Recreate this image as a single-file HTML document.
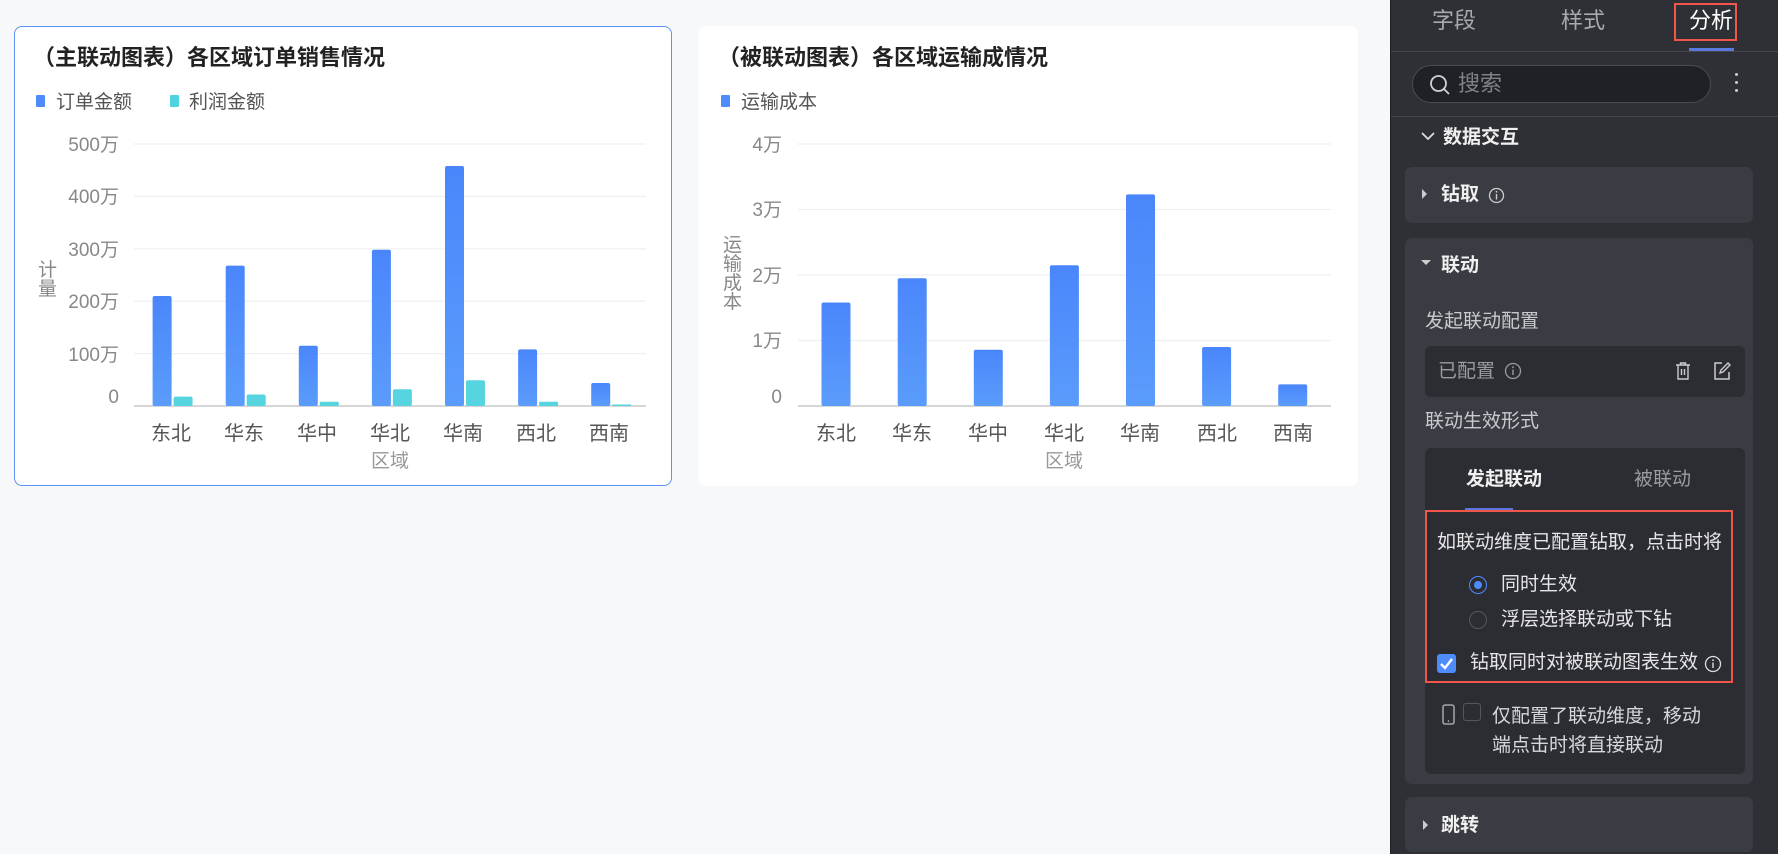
<!DOCTYPE html>
<html><head><meta charset="utf-8"><style>
*{margin:0;padding:0;box-sizing:border-box}
body{width:1778px;height:854px;background:#f7f8fa;position:relative;overflow:hidden;font-family:"Liberation Sans","Noto Sans CJK SC",sans-serif}
.a{position:absolute;white-space:nowrap}
.card{position:absolute;background:#fff;border-radius:8px}
#panel{position:absolute;left:1390px;top:0;width:388px;height:854px;background:#2f3036;border-left:1px solid #1e1f23}
.p{position:absolute;white-space:nowrap;font-size:19px;color:#d7d8db;line-height:22px}
.box{position:absolute;background:#3a3c43;border-radius:7px}
.inner{position:absolute;background:#2c2d33;border-radius:6px}
</style></head><body>
<div class="card" style="left:14px;top:26px;width:658px;height:460px;border:1.5px solid #5b93f7"></div>
<div class="card" style="left:699px;top:26px;width:659px;height:460px"></div>
<svg class="a" style="left:0;top:0" width="1390" height="854" font-family="Liberation Sans,Noto Sans CJK SC,sans-serif">
<defs><linearGradient id="g" x1="0" y1="0" x2="0" y2="1"><stop offset="0" stop-color="#4a86fb"/><stop offset="1" stop-color="#5a9cfb"/></linearGradient></defs>
<text x="33" y="65" font-size="22" font-weight="bold" fill="#222">（主联动图表）各区域订单销售情况</text>
<rect x="36" y="95" width="9" height="12" rx="1" fill="#4e8cfb"/><text x="56" y="108" font-size="19" fill="#555">订单金额</text>
<rect x="170" y="95" width="9" height="12" rx="1" fill="#4fd3de"/><text x="189" y="108" font-size="19" fill="#555">利润金额</text>
<g stroke="#eeeff2" stroke-width="1.2"><line x1="134" y1="144" x2="646" y2="144"/><line x1="134" y1="196.4" x2="646" y2="196.4"/><line x1="134" y1="248.8" x2="646" y2="248.8"/><line x1="134" y1="301.2" x2="646" y2="301.2"/><line x1="134" y1="353.6" x2="646" y2="353.6"/></g>
<line x1="134" y1="406" x2="646" y2="406" stroke="#c8c9cc" stroke-width="1.5"/>
<g font-size="19" fill="#888" text-anchor="end"><text x="119" y="151">500万</text><text x="119" y="203">400万</text><text x="119" y="256">300万</text><text x="119" y="308">200万</text><text x="119" y="361">100万</text><text x="119" y="403">0</text></g>
<g font-size="19" fill="#888"><text x="38" y="276">计</text><text x="38" y="295">量</text></g>
<g fill="url(#g)"><rect x="152.6" y="296" width="19" height="110" rx="2"/><rect x="225.7" y="265.6" width="19" height="140.4" rx="2"/><rect x="298.8" y="345.7" width="19" height="60.3" rx="2"/><rect x="371.9" y="249.8" width="19" height="156.2" rx="2"/><rect x="445" y="166" width="19" height="240" rx="2"/><rect x="518.1" y="349.4" width="19" height="56.6" rx="2"/><rect x="591.2" y="383" width="19" height="23" rx="2"/></g>
<g fill="#56d4df"><rect x="173.6" y="396.6" width="19" height="9.4" rx="2"/><rect x="246.7" y="394.5" width="19" height="11.5" rx="2"/><rect x="319.8" y="401.8" width="19" height="4.2" rx="1"/><rect x="392.9" y="389.2" width="19" height="16.8" rx="2"/><rect x="466" y="380.3" width="19" height="25.7" rx="2"/><rect x="539.1" y="401.8" width="19" height="4.2" rx="1"/><rect x="612.2" y="404.5" width="19" height="1.5"/></g>
<g font-size="20" fill="#555" text-anchor="middle"><text x="171" y="440">东北</text><text x="244" y="440">华东</text><text x="317" y="440">华中</text><text x="390" y="440">华北</text><text x="463" y="440">华南</text><text x="536" y="440">西北</text><text x="609" y="440">西南</text></g>
<text x="390" y="467" font-size="19" fill="#999" text-anchor="middle">区域</text>

<text x="718" y="65" font-size="22" font-weight="bold" fill="#222">（被联动图表）各区域运输成情况</text>
<rect x="721" y="95" width="9" height="12" rx="1" fill="#4e8cfb"/><text x="741" y="108" font-size="19" fill="#555">运输成本</text>
<g stroke="#eeeff2" stroke-width="1.2"><line x1="798" y1="144" x2="1331" y2="144"/><line x1="798" y1="209.5" x2="1331" y2="209.5"/><line x1="798" y1="275" x2="1331" y2="275"/><line x1="798" y1="340.5" x2="1331" y2="340.5"/></g>
<line x1="798" y1="406" x2="1331" y2="406" stroke="#c8c9cc" stroke-width="1.5"/>
<g font-size="19" fill="#888" text-anchor="end"><text x="782" y="151">4万</text><text x="782" y="216">3万</text><text x="782" y="282">2万</text><text x="782" y="347">1万</text><text x="782" y="403">0</text></g>
<g font-size="19" fill="#888"><text x="723" y="251">运</text><text x="723" y="270">输</text><text x="723" y="289">成</text><text x="723" y="308">本</text></g>
<g fill="url(#g)"><rect x="821.5" y="302.5" width="29" height="103.5" rx="2"/><rect x="897.7" y="278.3" width="29" height="127.7" rx="2"/><rect x="973.8" y="349.7" width="29" height="56.3" rx="2"/><rect x="1049.9" y="265.2" width="29" height="140.8" rx="2"/><rect x="1126" y="194.4" width="29" height="211.6" rx="2"/><rect x="1202.1" y="347" width="29" height="59" rx="2"/><rect x="1278.2" y="384.4" width="29" height="21.6" rx="2"/></g>
<g font-size="20" fill="#555" text-anchor="middle"><text x="836" y="440">东北</text><text x="912" y="440">华东</text><text x="988" y="440">华中</text><text x="1064" y="440">华北</text><text x="1140" y="440">华南</text><text x="1217" y="440">西北</text><text x="1293" y="440">西南</text></g>
<text x="1064" y="467" font-size="19" fill="#999" text-anchor="middle">区域</text>
</svg>

<div id="panel">
<div class="p" style="left:41px;top:8px;font-size:22px;line-height:26px;color:#a9aaae">字段</div>
<div class="p" style="left:170px;top:8px;font-size:22px;line-height:26px;color:#a9aaae">样式</div>
<div class="p" style="left:298px;top:8px;font-size:22px;line-height:26px;color:#fff">分析</div>
<div class="a" style="left:283px;top:3px;width:63px;height:38px;border:2.5px solid #f0564a"></div>
<div class="a" style="left:298px;top:48px;width:45px;height:3px;background:#5b78e0"></div>
<div class="a" style="left:0;top:51px;width:388px;height:1px;background:#45464c"></div>
<div class="a" style="left:21px;top:65px;width:299px;height:38px;border-radius:19px;background:#202126;border:1px solid #4a4b51"></div>
<svg class="a" style="left:38px;top:74px" width="22" height="22"><circle cx="9.5" cy="9.5" r="7.5" fill="none" stroke="#d0d1d4" stroke-width="1.8"/><line x1="15" y1="15" x2="20" y2="20" stroke="#d0d1d4" stroke-width="1.8"/></svg>
<div class="p" style="left:67px;top:71px;font-size:22px;line-height:26px;color:#808186">搜索</div>
<div class="a" style="left:344px;top:73px;width:3px;height:3px;border-radius:2px;background:#ccc;box-shadow:0 8px #ccc,0 16px #ccc"></div>
<div class="a" style="left:0;top:116px;width:388px;height:1px;background:#45464c"></div>
<svg class="a" style="left:29px;top:130px" width="16" height="12"><path d="M2 3 L8 9 L14 3" fill="none" stroke="#ddd" stroke-width="1.8"/></svg>
<div class="p" style="left:52px;top:127px;font-weight:bold;color:#f0f0f0">数据交互</div>
<div class="box" style="left:14px;top:167px;width:348px;height:56px"></div>
<svg class="a" style="left:31px;top:189px" width="6" height="10"><path d="M0 0 L5 5 L0 10Z" fill="#ccc"/></svg>
<div class="p" style="left:50px;top:184px;font-weight:bold;color:#f0f0f0">钻取</div>
<svg class="a" style="left:97px;top:187px" width="17" height="17"><circle cx="8.5" cy="8.5" r="7" fill="none" stroke="#ccc" stroke-width="1.3"/><line x1="8.5" y1="7" x2="8.5" y2="12.5" stroke="#ccc" stroke-width="1.4"/><circle cx="8.5" cy="4.8" r="0.9" fill="#ccc"/></svg>
<div class="box" style="left:14px;top:238px;width:348px;height:546px"></div>
<svg class="a" style="left:30px;top:259px" width="12" height="8"><path d="M0 1 L10 1 L5 6Z" fill="#ccc"/></svg>
<div class="p" style="left:50px;top:255px;font-weight:bold;color:#f0f0f0">联动</div>
<div class="p" style="left:34px;top:311px;color:#c9cacd">发起联动配置</div>
<div class="inner" style="left:34px;top:346px;width:320px;height:51px"></div>
<div class="p" style="left:47px;top:361px;color:#9a9ba0">已配置</div>
<svg class="a" style="left:113px;top:362px" width="18" height="18"><circle cx="9" cy="9" r="7.5" fill="none" stroke="#9a9ba0" stroke-width="1.3"/><line x1="9" y1="7.5" x2="9" y2="13" stroke="#9a9ba0" stroke-width="1.4"/><circle cx="9" cy="5.2" r="0.9" fill="#9a9ba0"/></svg>
<svg class="a" style="left:283px;top:361px" width="18" height="20"><path d="M2 4 H16 M6.5 4 V2 H11.5 V4 M4 4 V18 H14 V4 M7.5 8 V14 M10.5 8 V14" fill="none" stroke="#ccc" stroke-width="1.4"/></svg>
<svg class="a" style="left:321px;top:361px" width="20" height="20"><path d="M10 2 H3 V18 H17 V11" fill="none" stroke="#ccc" stroke-width="1.5"/><path d="M8 12 L9 9 L16 2 L18 4 L11 11Z" fill="none" stroke="#ccc" stroke-width="1.4"/></svg>
<div class="p" style="left:34px;top:411px;color:#c9cacd">联动生效形式</div>
<div class="inner" style="left:34px;top:448px;width:320px;height:326px"></div>
<div class="p" style="left:75px;top:469px;font-weight:bold;color:#f0f0f0">发起联动</div>
<div class="p" style="left:243px;top:469px;color:#9a9ba0">被联动</div>
<div class="a" style="left:74px;top:508px;width:48px;height:2px;background:#5b78e0"></div>
<div class="a" style="left:34px;top:510px;width:308px;height:173px;border:2.5px solid #f0564a"></div>
<div class="p" style="left:46px;top:532px;color:#e6e6e8">如联动维度已配置钻取，点击时将</div>
<div class="a" style="left:78px;top:576px;width:18px;height:18px;border-radius:50%;border:1.5px solid #4e8cfb"></div>
<div class="a" style="left:83px;top:581px;width:8px;height:8px;border-radius:50%;background:#4e8cfb"></div>
<div class="p" style="left:110px;top:574px;color:#e6e6e8">同时生效</div>
<div class="a" style="left:78px;top:611px;width:18px;height:18px;border-radius:50%;border:1.5px solid #55565c"></div>
<div class="p" style="left:110px;top:609px;color:#e6e6e8">浮层选择联动或下钻</div>
<div class="a" style="left:46px;top:654px;width:19px;height:19px;border-radius:3px;background:#4e8cfb"></div>
<svg class="a" style="left:46px;top:654px" width="19" height="19"><path d="M4 10 L8 14 L15 5" fill="none" stroke="#fff" stroke-width="2.4"/></svg>
<div class="p" style="left:79px;top:652px;color:#e6e6e8">钻取同时对被联动图表生效</div>
<svg class="a" style="left:313px;top:655px" width="18" height="18"><circle cx="9" cy="9" r="7.5" fill="none" stroke="#ddd" stroke-width="1.3"/><line x1="9" y1="7.5" x2="9" y2="13" stroke="#ddd" stroke-width="1.4"/><circle cx="9" cy="5.2" r="0.9" fill="#ddd"/></svg>
<svg class="a" style="left:51px;top:704px" width="14" height="22"><rect x="1" y="1" width="11" height="19" rx="2" fill="none" stroke="#bbb" stroke-width="1.3"/><circle cx="6.5" cy="17" r="0.8" fill="#bbb"/></svg>
<div class="a" style="left:72px;top:703px;width:18px;height:18px;border-radius:3px;border:1.3px solid #55565c"></div>
<div class="p" style="left:101px;top:702px;color:#d7d8db;line-height:29px">仅配置了联动维度，移动<br>端点击时将直接联动</div>
<div class="box" style="left:14px;top:797px;width:348px;height:55px"></div>
<svg class="a" style="left:32px;top:820px" width="6" height="10"><path d="M0 0 L5 5 L0 10Z" fill="#ccc"/></svg>
<div class="p" style="left:50px;top:815px;font-weight:bold;color:#f0f0f0">跳转</div>
</div>
</body></html>
